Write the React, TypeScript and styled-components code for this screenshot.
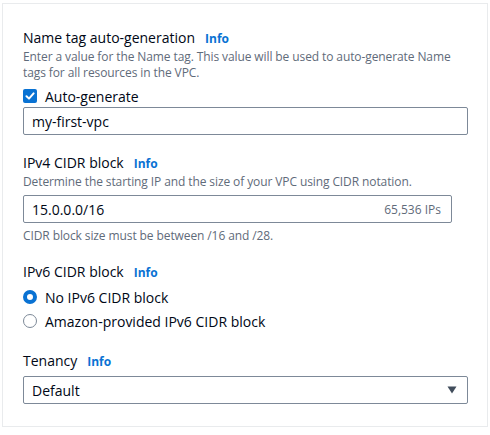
import styled, { createGlobalStyle } from "styled-components";

const GlobalStyle = createGlobalStyle`
  html, body {
    margin: 0;
    padding: 0;
    background: #ffffff;
  }
  body {
    font-family: "Open Sans", "Noto Sans", Arial, sans-serif;
    color: #000716;
  }
`;

const Page = styled.div`
  width: 490px;
  height: 435px;
  padding: 3px 2px 0 2px;
  box-sizing: border-box;
`;

const Panel = styled.section`
  border: 1px solid #e9ebed;
  padding: 23px 19px 22px 20px;
  display: flex;
  flex-direction: column;
  gap: 17px;
`;

const Field = styled.div`
  display: flex;
  flex-direction: column;
`;

const LabelRow = styled.div`
  display: flex;
  align-items: baseline;
  gap: 10px;
  font-size: 14px;
  line-height: 21px;
  color: #000716;
`;

const Info = styled.span`
  font-size: 12px;
  font-weight: 700;
  color: #0972d3;
`;

const Description = styled.p`
  margin: 0;
  font-size: 12px;
  line-height: 16px;
  letter-spacing: -0.1px;
  color: #5f6b7a;
`;

const Constraint = styled(Description)`
  margin-top: 5px;
`;

const Control = styled.div<{ $width?: number; $gap?: number }>`
  box-sizing: border-box;
  height: 28px;
  width: ${(p) => (p.$width ? `${p.$width}px` : "100%")};
  border: 1px solid #7d8998;
  border-radius: 2px;
  padding: 0 10px 0 8px;
  display: flex;
  align-items: center;
  justify-content: space-between;
  font-size: 14px;
  color: #000716;
  margin-top: ${(p) => p.$gap ?? 0}px;
`;

const Suffix = styled.span`
  font-size: 12px;
  color: #5f6b7a;
`;

const Option = styled.label`
  display: flex;
  align-items: center;
  gap: 8px;
  height: 24px;
  font-size: 14px;
  color: #000716;
`;

const CheckRow = styled(Option)`
  height: 22px;
  margin-top: 4px;
`;

const Box = styled.span`
  width: 14px;
  height: 14px;
  border-radius: 2px;
  background: #0972d3;
  display: flex;
  align-items: center;
  justify-content: center;
`;

const Radio = styled.span<{ $on?: boolean }>`
  box-sizing: border-box;
  width: 14px;
  height: 14px;
  border-radius: 50%;
  border: ${(p) => (p.$on ? "4px solid #0972d3" : "1.5px solid #7d8998")};
  background: #fff;
`;

const Options = styled.div`
  display: flex;
  flex-direction: column;
  margin-top: 2px;
`;

const Caret = styled.svg`
  width: 10px;
  height: 8px;
`;

export default function App() {
  return (
    <>
      <GlobalStyle />
      <Page>
        <Panel>
          <Field>
            <LabelRow>
              Name tag auto-generation <Info>Info</Info>
            </LabelRow>
            <Description>
              Enter a value for the Name tag. This value will be used to auto-generate Name
              <br />
              tags for all resources in the VPC.
            </Description>
            <CheckRow>
              <Box>
                <svg width="10" height="10" viewBox="0 0 10 10">
                  <path d="M1.5 5.2 L4 7.6 L8.6 2.4" fill="none" stroke="#fff" strokeWidth="2" strokeLinecap="round" strokeLinejoin="round" />
                </svg>
              </Box>
              Auto-generate
            </CheckRow>
            <Control>my-first-vpc</Control>
          </Field>

          <Field>
            <LabelRow>
              IPv4 CIDR block <Info>Info</Info>
            </LabelRow>
            <Description>Determine the starting IP and the size of your VPC using CIDR notation.</Description>
            <Control $width={429} $gap={5}>
              15.0.0.0/16
              <Suffix>65,536 IPs</Suffix>
            </Control>
            <Constraint>CIDR block size must be between /16 and /28.</Constraint>
          </Field>

          <Field>
            <LabelRow>
              IPv6 CIDR block <Info>Info</Info>
            </LabelRow>
            <Options>
              <Option>
                <Radio $on />
                No IPv6 CIDR block
              </Option>
              <Option>
                <Radio />
                Amazon-provided IPv6 CIDR block
              </Option>
            </Options>
          </Field>

          <Field>
            <LabelRow>
              Tenancy <Info>Info</Info>
            </LabelRow>
            <Control $gap={4}>
              Default
              <Caret viewBox="0 0 10 8">
                <path d="M0.5 0.5 H9.5 L5 7.5 Z" fill="#414d5c" />
              </Caret>
            </Control>
          </Field>
        </Panel>
      </Page>
    </>
  );
}
